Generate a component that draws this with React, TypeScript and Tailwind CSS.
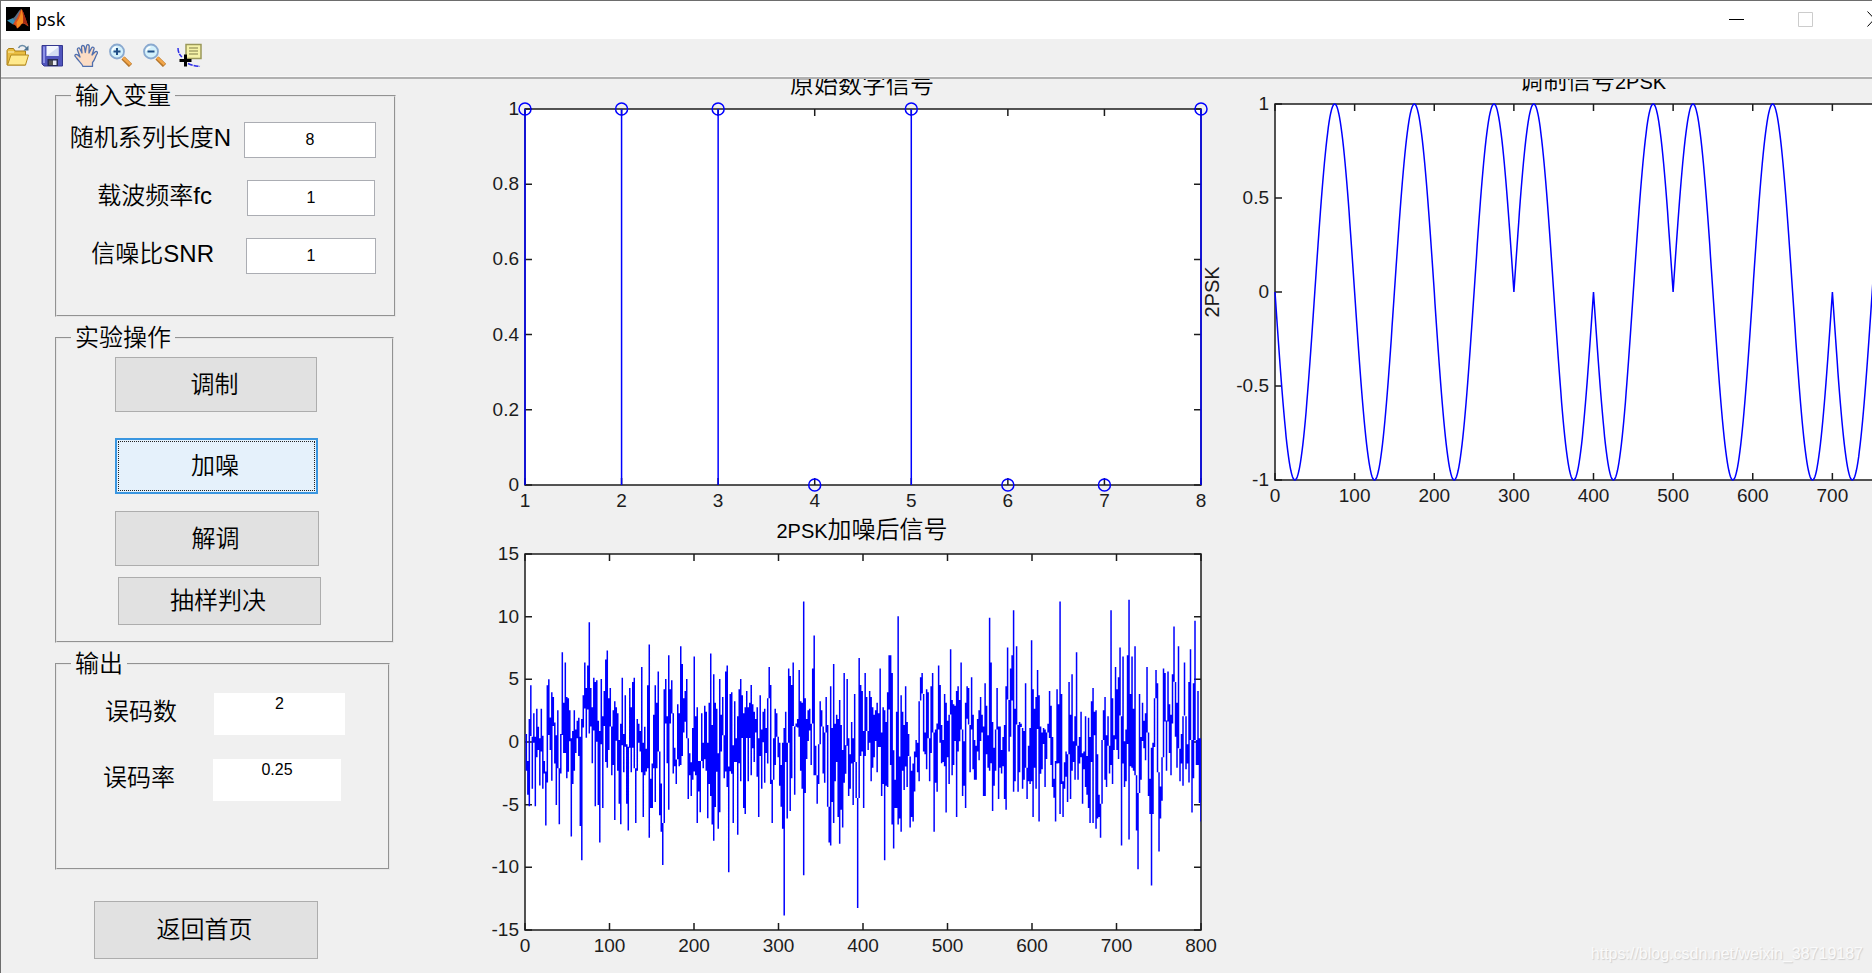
import type { ReactNode } from "react";

const BITS = [1, 1, 1, 0, 1, 0, 0, 1];

// [top, bottom] extents of the noisy signal, one pair per screen column
const NOISE = `
432 543,513 615,387 650,285 438,440 597,369 458,440 650,356 502,410 480,445 587,356 485,437 597,513 551,545 708,285 578,
267 435,382 480,306 573,320 408,397 521,436 646,360 535,535 704,432 551,185 435,338 489,216 489,320 565,324 546,360 454,
445 741,423 583,360 543,418 489,392 445,383 498,440 709,387 813,315 412,216 355,293 443,225 358,95 430,293 409,351 520,
262 421,275 650,270 455,392 646,423 759,266 463,378 655,302 408,207 516,180 534,324 480,293 409,409 556,360 525,333 691,
351 452,369 543,450 642,401 704,262 466,432 547,315 470,463 642,470 723,293 473,351 547,275 473,262 535,535 700,387 543,
401 458,423 485,230 547,458 682,410 556,476 545,285 535,162 745,567 655,521 655,374 535,285 637,338 535,243 485,485 677,
581 727,700 827,297 700,266 400,378 520,194 660,297 400,270 370,369 551,473 529,509 583,342 508,369 529,167 525,221 498,
324 427,302 395,266 445,445 628,490 556,517 619,414 570,198 545,378 556,351 700,513 605,513 668,369 513,458 535,347 508,
365 543,458 686,338 583,189 619,405 705,252 754,338 652,356 546,490 718,266 668,374 485,320 436,436 565,243 545,225 592,
530 849,311 544,306 552,466 700,333 516,445 516,378 736,297 520,266 574,315 444,369 655,351 673,302 444,351 574,338 444,
284 556,342 475,365 516,387 427,351 561,445 682,315 498,418 597,365 457,356 579,414 489,324 521,230 324,284 583,570 700,
445 570,356 525,369 440,440 502,458 588,525 651,458 718,414 979,365 516,458 687,234 458,257 664,284 565,216 408,409 615,
400 410,387 412,239 440,333 543,338 597,32 858,324 610,387 507,360 453,356 421,401 525,234 400,135 556,467 556,556 642,
463 583,333 463,360 409,409 551,427 579,320 427,405 651,651 759,288 768,414 637,221 700,401 574,374 516,387 682,329 763,
405 660,480 714,248 579,466 552,266 467,445 619,493 597,396 521,445 646,311 516,516 625,625 957,203 625,284 498,302 485,
423 655,248 498,320 423,423 480,302 458,320 574,351 534,374 502,360 453,338 547,369 471,234 471,427 619,351 583,360 813,
396 588,306 592,194 358,194 525,248 705,481 777,570 655,365 655,77 705,500 687,315 727,365 543,405 601,288 530,396 592,
432 498,500 714,543 682,521 696,485 605,450 502,458 547,333 574,261 331,248 310,311 485,427 493,297 538,306 445,445 574,
288 489,248 427,427 727,418 579,400 606,225 418,284 458,405 520,450 516,311 529,338 669,392 502,374 583,176 373,329 556,
342 525,347 453,302 682,288 485,329 454,216 418,418 619,454 588,338 655,288 386,293 403,405 547,261 418,374 538,450 570,
467 570,387 485,360 511,320 453,374 427,409 619,279 619,347 493,436 534,81 543,216 520,396 664,473 588,418 543,293 418,
409 628,409 534,480 551,441 529,405 628,288 660,171 328,329 485,234 440,194 331,59 606,356 574,167 403,405 606,396 547,
401 411,414 597,423 570,279 534,534 628,467 574,414 583,149 574,297 682,356 534,320 597,239 417,315 696,409 552,427 538,
414 462,418 592,427 507,401 427,302 444,347 525,441 592,567 624,513 696,297 521,342 520,32 673,311 583,574 682,517 597,
485 561,493 637,275 493,374 628,252 543,454 516,378 570,185 467,467 570,441 521,365 502,490 642,485 538,378 592,498 615,
383 655,441 700,333 516,293 700,365 436,360 718,493 687,615 682,642 745,450 642,360 450,320 570,436 592,378 467,467 551,
59 525,324 583,436 480,230 448,297 480,261 507,171 376,378 768,198 521,454 592,418 574,194 462,27 750,311 529,198 534,
356 543,167 556,556 723,610 840,311 610,441 570,338 453,392 475,369 511,230 427,427 619,567 673,473 889,458 673,324 471,
239 324,279 547,547 786,590 687,502 633,234 502,248 394,391 543,243 394,342 489,374 556,252 400,108 274,275 440,338 534,
167 475,476 574,432 521,378 588,216 376,378 538,463 521,275 578,176 450,450 669,279 565,90 450,450 525,302 525,445 640,
445 696`;

const noisePath = NOISE.trim()
  .split(",")
  .map((pair, i) => {
    const [top, bottom] = pair.trim().split(" ");
    return `M${5 + i * 4.5} ${top}V${bottom}`;
  })
  .join("");

const LABEL = "font-['Liberation_Sans','Noto_Sans_CJK_SC',sans-serif]";

interface AxesProps {
  x: number;
  y: number;
  width: number;
  xTicks: string[];
  yTicks: string[];
  title: ReactNode;
  titleY: number;
  children: ReactNode;
}

const PLOT_HEIGHT = 376;

function Axes({ x, y, width, xTicks, yTicks, title, titleY, children }: AxesProps) {
  const bottom = y + PLOT_HEIGHT;
  const right = x + width;
  const xAt = (i: number) => x + (i * width) / (xTicks.length - 1);
  const yAt = (i: number) => bottom - (i * PLOT_HEIGHT) / (yTicks.length - 1);

  return (
    <g className={LABEL}>
      <rect
        x={x}
        y={y}
        width={width}
        height={PLOT_HEIGHT}
        fill="#fff"
        stroke="#1c1c1c"
        strokeWidth="1.5"
      />
      <g stroke="#1c1c1c" strokeWidth="1.5">
        {xTicks.map((t, i) => (
          <path key={t} d={`M${xAt(i)} ${y}v7M${xAt(i)} ${bottom}v-7`} />
        ))}
        {yTicks.map((t, i) => (
          <path key={t} d={`M${x} ${yAt(i)}h7M${right} ${yAt(i)}h-7`} />
        ))}
      </g>
      {children}
      <g fill="#1c1c1c" fontSize="19">
        {xTicks.map((t, i) => (
          <text key={t} x={xAt(i)} y={bottom + 22} textAnchor="middle">
            {t}
          </text>
        ))}
        {yTicks.map((t, i) => (
          <text key={t} x={x - 6} y={yAt(i) + 6} textAnchor="end">
            {t}
          </text>
        ))}
      </g>
      <text
        x={x + width / 2 - 1}
        y={titleY}
        textAnchor="middle"
        fontSize="24"
        className="font-[350]"
      >
        {title}
      </text>
    </g>
  );
}

function SourceChart() {
  const step = 676 / 7;
  return (
    <svg viewBox="0 0 733 436" className="block w-full overflow-visible">
      <Axes
        x={55}
        y={30}
        width={676}
        xTicks={["1", "2", "3", "4", "5", "6", "7", "8"]}
        yTicks={["0", "0.2", "0.4", "0.6", "0.8", "1"]}
        title="原始数字信号"
        titleY={14}
      >
        <g stroke="#0000ff" strokeWidth="1.5" fill="none">
          {BITS.map((bit, i) => (
            <g key={i}>
              {bit === 1 && <path d={`M${55 + i * step} 30V406`} />}
              <circle cx={55 + i * step} cy={bit ? 30 : 406} r="6" />
            </g>
          ))}
        </g>
      </Axes>
    </svg>
  );
}

function ModulatedChart() {
  const points: string[] = [];
  for (let t = 0; t <= 800; t++) {
    const bit = BITS[Math.min(7, Math.floor(t / 100))];
    const v = Math.sin((2 * Math.PI * t) / 100) * (bit ? -1 : 1);
    points.push(`${(72 + (t * 637) / 800).toFixed(1)},${(213 - v * 188).toFixed(1)}`);
  }
  return (
    <svg viewBox="0 0 669 436" className="block w-full overflow-visible">
      <Axes
        x={72}
        y={25}
        width={637}
        xTicks={["0", "100", "200", "300", "400", "500", "600", "700", ""]}
        yTicks={["-1", "-0.5", "0", "0.5", "1"]}
        title={
          <>
            调制信号<tspan fontSize="20">2PSK</tspan>
          </>
        }
        titleY={10}
      >
        <polyline
          points={points.join(" ")}
          fill="none"
          stroke="#0000ff"
          strokeWidth="1.5"
        />
        <text
          transform="translate(16 213) rotate(-90)"
          textAnchor="middle"
          fontSize="20"
          fill="#1c1c1c"
        >
          2PSK
        </text>
      </Axes>
    </svg>
  );
}

function NoisyChart() {
  return (
    <svg viewBox="0 0 733 458" className="block w-full overflow-visible">
      <Axes
        x={55}
        y={39}
        width={676}
        xTicks={["0", "100", "200", "300", "400", "500", "600", "700", "800"]}
        yTicks={["-15", "-10", "-5", "0", "5", "10", "15"]}
        title={
          <>
            <tspan fontSize="20">2PSK</tspan>加噪后信号
          </>
        }
        titleY={23}
      >
        <svg
          x={55}
          y={39}
          width={676}
          height={PLOT_HEIGHT}
          viewBox="1 -111 2029 1134"
          preserveAspectRatio="none"
        >
          <path d={noisePath} stroke="#0000ff" strokeWidth="4.5" />
        </svg>
      </Axes>
    </svg>
  );
}

function MatlabLogo() {
  return (
    <svg viewBox="0 0 24 24" className="h-6 w-6">
      <rect width="24" height="24" fill="#000" />
      <path d="M1 13.5 7 11l3.5 3L7 17.5z" fill="#3b8fb5" />
      <path d="M7 11c3-1 4.500-6.500 8-9l-2 8-4 5z" fill="#5d6f86" />
      <path d="M15.500 2c-2 2-3 8-6.500 12l-2 3.500c2 0 3 1 4 4 3-1 4-5 6-5s3 1.500 5.500 3C20 14 18 5 15.500 2z" fill="#d9501e" />
      <path d="M15.500 2c-.5 4-1.500 9-5 13.500L11 21c3-1 4-5 6-5 1-4-.5-11-1.500-14z" fill="#f58a1f" />
      <path d="M15.500 2c2 4 2 10 1.500 14 2 0 3.500 1.500 5.500 3C20 14 18 5 15.500 2z" fill="#a32a14" />
    </svg>
  );
}

function OpenIcon() {
  return (
    <svg viewBox="0 0 24 24" className="h-6 w-6">
      <path d="M1 22V7.500l1.500-2h5l1.500 2.500h10.500V22z" fill="#e9bd42" stroke="#a87d16" />
      <path d="M1.500 22 5 12h17.500l-3 10z" fill="#ffe98c" stroke="#b58a1c" />
      <path d="M2 9h6" stroke="#fff3b8" />
      <path d="M12.500 5c1.500-3 5.500-3.500 8 0" fill="none" stroke="#6a8ba6" strokeWidth="1.500" />
      <path d="M22.500 2.500V7.500h-5z" fill="#4d7290" />
    </svg>
  );
}

function SaveIcon() {
  return (
    <svg viewBox="0 0 24 24" className="h-6 w-6">
      <path d="M2 2.500h20.500V23H4l-2-2z" fill="#5055bd" stroke="#34378f" />
      <path d="M3 3.500h2V20H3z" fill="#8d92e6" />
      <path d="M6.500 3h12v10h-12z" fill="#f3f6fd" />
      <path d="m6.500 13 12-9v9z" fill="#d3ddf3" />
      <path d="M7.500 16H18v7H7.500z" fill="#262a55" />
      <path d="M13 17.500h3.500V22H13z" fill="#e9ecf5" />
      <path d="M9 17.500h4V22H9z" fill="#555" />
    </svg>
  );
}

function HandIcon() {
  return (
    <svg viewBox="0 0 24 24" className="h-6 w-6">
      <path
        d="M9 23.500c-1-3-4-5-6.500-8.500-1-1.500-2-2-1.500-3 1-1.500 3 0 5 2L3.500 7C3 5 5 4 6 6l2 4L7.500 4c0-2 2.500-2 3 0l.8 5.500L12.500 3c.4-2 3-1.500 2.700.5L15 10l2.500-5c1-1.700 3-.7 2.500 1l-2 6 3-3c1.500-1.300 3 0 2.200 1.500C21 14 21 17 18.500 19.500V23.500z"
        fill="#fbdcc4"
        stroke="#4f6fae"
        strokeWidth="1.300"
        strokeLinejoin="round"
      />
    </svg>
  );
}

function ZoomIcon({ plus }: { plus?: boolean }) {
  return (
    <svg viewBox="0 0 24 24" className="h-6 w-6">
      <path d="m15 15 7.500 7.500" stroke="#b5752a" strokeWidth="4.500" />
      <path d="m15 14.500 7.500 7" stroke="#f2a64a" strokeWidth="2.500" />
      <circle cx="9" cy="8.500" r="7" fill="#d3f0fb" stroke="#8aa9cf" strokeWidth="1.800" />
      <path d="M4.500 8a4.500 4.500 0 0 1 4-4" fill="none" stroke="#fff" strokeWidth="1.500" />
      <path d="M5.500 8.500h7" stroke="#1f4d85" strokeWidth="2" />
      {plus && <path d="M9 5v7" stroke="#1f4d85" strokeWidth="2" />}
    </svg>
  );
}

function DataCursorIcon() {
  return (
    <svg viewBox="0 0 26 24" className="h-6 w-[26px]">
      <path d="M10 1.500h15v14H10z" fill="#f5f2a8" stroke="#9a985a" strokeWidth="1.500" />
      <path d="M13 5h9M13 8h9M13 11h9" stroke="#a7a468" strokeWidth="1.300" />
      <path d="M2 5c0 4 1.500 7 4 9M12 20.500c3 1.500 7 2.500 12 3" fill="none" stroke="#2f2fe8" strokeWidth="1.500" strokeDasharray="5 1" />
      <path d="M9.500 11.500v12M3.500 17.500h12" stroke="#000" strokeWidth="3" />
    </svg>
  );
}

const tools = [
  { name: "Open", icon: <OpenIcon /> },
  { name: "Save", icon: <SaveIcon /> },
  { name: "Pan", icon: <HandIcon /> },
  { name: "Zoom in", icon: <ZoomIcon plus /> },
  { name: "Zoom out", icon: <ZoomIcon /> },
  { name: "Data cursor", icon: <DataCursorIcon /> },
];

const inputs = [
  { id: "length", label: "随机系列长度N", value: "8", labelClass: "w-[187px] pr-[13px]", inputClass: "w-[132px]" },
  { id: "carrier", label: "载波频率fc", value: "1", labelClass: "w-[190px] pr-[35px]", inputClass: "w-[128px]" },
  { id: "snr", label: "信噪比SNR", value: "1", labelClass: "w-[189px] pr-[32px]", inputClass: "w-[130px]" },
];

const outputs = [
  { id: "errors", label: "误码数", value: "2", labelClass: "w-[157px] pr-[37px]", boxClass: "w-[131px]" },
  { id: "rate", label: "误码率", value: "0.25", labelClass: "w-[156px] pr-[38px]", boxClass: "w-[128px]" },
];

const BUTTON = "block border border-[#adadad] bg-[#e1e1e1] pr-[3px]";
const GROUP = "border-2 border-[#e6e6e6] [border-style:groove]";
const LEGEND = "ml-[14px] px-1 leading-6";

export default function App() {
  return (
    <div className="relative flex min-h-screen flex-col overflow-hidden border-t border-l border-[#6d6d6d] bg-[#f0f0f0] text-black">
      <header className="flex h-[38px] items-center bg-white pb-0.5 pl-[5px]">
        <MatlabLogo />
        <h1 className="ml-1.5 flex-1 font-['Noto_Sans',sans-serif] text-lg leading-6">psk</h1>
        <button aria-label="Minimize" className="mr-[54px]">
          <svg viewBox="0 0 15 16" className="h-4 w-[15px]">
            <path d="M0 8.500h15" stroke="#000" />
          </svg>
        </button>
        <button aria-label="Maximize" disabled className="mr-[54px]">
          <svg viewBox="0 0 15 16" className="h-4 w-[15px]">
            <path d="M.5 1.500h14v14H.5z" fill="none" stroke="#ccc" />
          </svg>
        </button>
        <button aria-label="Close" className="w-[5px] overflow-hidden">
          <svg viewBox="0 0 15 16" className="h-4 w-[15px]">
            <path d="m.5 .5 14 15m0-15-14 15" stroke="#000" />
          </svg>
        </button>
      </header>

      <div className="flex h-10 items-start gap-[10px] border-b-2 border-[#b0b0b0] pt-1 pl-[5px] shadow-[inset_0_-1px_0_#f8f8f8]">
        {tools.map((tool) => (
          <button key={tool.name} aria-label={tool.name}>
            {tool.icon}
          </button>
        ))}
      </div>

      <main className="flex flex-1 overflow-hidden">
        <aside
          className={`flex w-[469px] shrink-0 flex-col items-start gap-[9px] pt-[5px] pl-[54px] text-2xl leading-7 font-[350] ${LABEL}`}
        >
          <fieldset className={`w-[341px] pb-[41px] ${GROUP}`}>
            <legend className={LEGEND}>输入变量</legend>
            <div className="flex flex-col gap-[22px] pt-[14px]">
              {inputs.map((f) => (
                <div key={f.id} className="flex h-9 items-center">
                  <label htmlFor={f.id} className={`pb-1 text-right ${f.labelClass}`}>
                    {f.label}
                  </label>
                  <input
                    id={f.id}
                    defaultValue={f.value}
                    className={`h-9 border border-[#abadb3] bg-white text-center text-base ${f.inputClass}`}
                  />
                </div>
              ))}
            </div>
          </fieldset>

          <fieldset className={`w-[339px] pb-4 ${GROUP}`}>
            <legend className={LEGEND}>实验操作</legend>
            <button className={`mt-[7px] ml-[58px] h-[55px] w-[202px] ${BUTTON}`}>调制</button>
            <button className="mt-[26px] ml-[58px] block h-[56px] w-[203px] border-2 border-[#3a96e0] bg-[#e5f1fb] pr-[3px] outline-1 outline-offset-[-4px] outline-[#222] outline-dotted">
              加噪
            </button>
            <button className={`mt-[17px] ml-[58px] h-[55px] w-[204px] ${BUTTON}`}>解调</button>
            <button className={`mt-[11px] ml-[61px] h-12 w-[203px] ${BUTTON}`}>抽样判决</button>
          </fieldset>

          <fieldset className={`w-[335px] pb-[67px] ${GROUP}`}>
            <legend className={LEGEND}>输出</legend>
            <div className="flex flex-col gap-6 pt-[17px]">
              {outputs.map((f) => (
                <div key={f.id} className="flex h-[42px] items-center">
                  <label htmlFor={f.id} className={`pb-1 text-right ${f.labelClass}`}>
                    {f.label}
                  </label>
                  <output
                    id={f.id}
                    className={`h-[42px] bg-white text-center text-base leading-[22px] ${f.boxClass}`}
                  >
                    {f.value}
                  </output>
                </div>
              ))}
            </div>
          </fieldset>

          <button className={`mt-[22px] ml-[39px] h-[58px] w-[224px] ${BUTTON}`}>返回首页</button>
        </aside>

        <div className="grid flex-1 grid-cols-[733fr_669fr] items-start">
          <div>
            <SourceChart />
            <NoisyChart />
          </div>
          <ModulatedChart />
        </div>
      </main>

      <p className="absolute right-[9px] bottom-[9px] font-['Liberation_Sans',sans-serif] text-base leading-5 text-[#fafafa] [text-shadow:1px_1px_1px_#cfcfcf]">
        https://blog.csdn.net/weixin_38719187
      </p>
    </div>
  );
}
